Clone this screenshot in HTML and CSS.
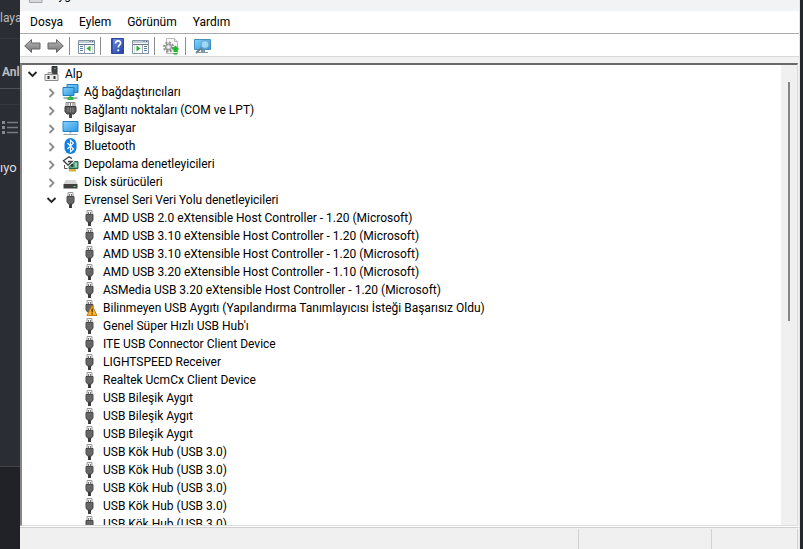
FILE: index.html
```html
<!DOCTYPE html>
<html lang="tr">
<head>
    <meta charset="UTF-8">
    <meta name="viewport" content="width=device-width, initial-scale=1.0">
    <title>Aygıt Yöneticisi</title>
    <link rel="stylesheet" href="styles.css">
</head>
<body>
    <!-- Shared icons -->
    <svg class="icon-defs" aria-hidden="true">
        <defs>
            <linearGradient id="screen" x1="0" y1="0" x2="1" y2="1">
                <stop offset="0" stop-color="#86d3fb"/>
                <stop offset="1" stop-color="#2c96e4"/>
            </linearGradient>
            <linearGradient id="metal" x1="0" y1="0" x2="0" y2="1">
                <stop offset="0" stop-color="#b8b8b8"/>
                <stop offset="1" stop-color="#767676"/>
            </linearGradient>
            <linearGradient id="help" x1="0" y1="0" x2="1" y2="1">
                <stop offset="0" stop-color="#6f92e4"/>
                <stop offset="1" stop-color="#1d3da6"/>
            </linearGradient>
        </defs>
        <symbol id="usb" viewBox="0 0 16 16">
            <path d="M5.500 5V.5h5V5" fill="#f2f2f2" stroke="#9a9a9a"/>
            <path d="M6.500 2h1v2h-1zM8.500 2h1v2h-1z" fill="#777"/>
            <path d="M4.500 4.500h7v5.500l-1.500 2h-4l-1.500-2z" fill="#666" stroke="#4a4a4a"/>
            <path d="M6.500 12h3v4h-3z" fill="#3c3c3c"/>
        </symbol>
        <symbol id="warn-usb" viewBox="0 0 16 16">
            <use href="#usb"/>
            <path d="M10.500 5.500L15.500 15.500h-10z" fill="#fdb827" stroke="#c77a10" stroke-linejoin="round"/>
            <path d="M10 8.500h1.200v4H10zM10 13.300h1.200v1.200H10z" fill="#33230a"/>
        </symbol>
        <symbol id="open" viewBox="0 0 16 16">
            <path d="M4 6l4 4 4-4" fill="none" stroke="#222" stroke-width="1.800"/>
        </symbol>
        <symbol id="closed" viewBox="0 0 16 16">
            <path d="M6 5l4 4-4 4" fill="none" stroke="#8c8c8c" stroke-width="1.800"/>
        </symbol>
    </svg>

    <aside class="backdrop">
        <span class="backdrop-top">laya</span>
        <strong class="backdrop-tab">Anl</strong>
        <div class="backdrop-list">
            <svg width="18" height="14" viewBox="0 0 18 14">
                <path d="M2 0h3v3H2zM2 5h3v3H2zM2 10h3v3H2z" fill="#858990"/>
                <path d="M7 1.500h11M7 6.500h11M7 11.500h11" stroke="#777b82" stroke-width="1.500"/>
            </svg>
        </div>
        <span class="backdrop-word">ıyo</span>
        <div class="backdrop-foot"></div>
    </aside>

    <main class="window">
        <header class="titlebar">
            <svg width="14" height="16" viewBox="0 0 14 16">
                <path d="M.5.5h12.500v15H.5z" fill="#d6d8db" stroke="#a6a6aa"/>
            </svg>
            <span>Aygıt Yöneticisi</span>
        </header>

        <nav class="menubar">
            <button>Dosya</button>
            <button>Eylem</button>
            <button>Görünüm</button>
            <button>Yardım</button>
        </nav>

        <div class="toolbar">
            <button aria-label="Geri">
                <svg width="17" height="16" viewBox="0 0 17 16">
                    <path d="M.7 8L7.500 1.500v3.500H16v6H7.500v3.500z" fill="url(#metal)" stroke="#666"/>
                </svg>
            </button>
            <button aria-label="İleri">
                <svg width="17" height="16" viewBox="0 0 17 16">
                    <path d="M16.300 8L9.500 1.500v3.500H1v6h8.500v3.500z" fill="url(#metal)" stroke="#666"/>
                </svg>
            </button>
            <span class="separator"></span>
            <button aria-label="Konsol ağacını göster">
                <svg width="17" height="16" viewBox="0 0 17 16">
                    <path d="M.5 2.500h16v13H.5z" fill="#fff" stroke="#8293a3"/>
                    <path d="M1 3h15v2H1z" fill="#c2ccd5"/>
                    <path d="M11.500 3.500h1M14 3.500h1M1 6.500h15" stroke="#627485"/>
                    <path d="M6.500 7v8" stroke="#9aa8b5"/>
                    <path d="M2 8.500h3M2 10.500h3M2 12.500h3" stroke="#537ca5"/>
                    <path d="M12.500 7.500v6L8.500 10.500z" fill="#2faa2f"/>
                    <path d="M14.500 7v8" stroke="#d5dce2"/>
                </svg>
            </button>
            <span class="separator"></span>
            <button aria-label="Yardım">
                <svg width="13" height="16" viewBox="0 0 13 16">
                    <path d="M.5.5h12v15H.5z" fill="url(#help)" stroke="#2c479b"/>
                    <path d="M1.500 1v14" stroke="#2f50ac"/>
                    <path d="M4.600 5.500c0-3.500 5-3.500 5-.5 0 2-2.300 2-2.300 4.500" fill="none" stroke="#fff" stroke-width="1.700"/>
                    <circle cx="7.200" cy="12.300" r="1.100" fill="#fff"/>
                </svg>
            </button>
            <button aria-label="Eylem bölmesini göster">
                <svg width="17" height="16" viewBox="0 0 17 16">
                    <path d="M.5 2.500h16v13H.5z" fill="#fff" stroke="#8293a3"/>
                    <path d="M1 3h15v2H1z" fill="#c2ccd5"/>
                    <path d="M11.500 3.500h1M14 3.500h1M1 6.500h15" stroke="#627485"/>
                    <path d="M10.500 7v8" stroke="#9aa8b5"/>
                    <path d="M12 8.500h3M12 10.500h3M12 12.500h3" stroke="#537ca5"/>
                    <path d="M4.500 7.500v6l4-3z" fill="#2faa2f"/>
                    <path d="M2.500 7v8" stroke="#d5dce2"/>
                </svg>
            </button>
            <span class="separator"></span>
            <button aria-label="Sürücüyü güncelle">
                <svg width="17" height="17" viewBox="0 0 17 17">
                    <path d="M3.500.5h8l3 3v12h-11z" fill="#f7f7f7" stroke="#bcbcbc"/>
                    <path d="M11.500.5v3h3" fill="#e0e0e0" stroke="#bcbcbc"/>
                    <circle cx="5.500" cy="9" r="4.500" fill="none" stroke="#8c8c8c" stroke-width="2" stroke-dasharray="2 1.500"/>
                    <circle cx="5.500" cy="9" r="3" fill="#ccc" stroke="#858585"/>
                    <circle cx="5.500" cy="9" r="1.200" fill="#fff"/>
                    <path d="M12.500 7.500l4 4h-2V14h-4v-2.500h-2zM10.500 15h4v1.500h-4z" fill="#22b62d"/>
                </svg>
            </button>
            <span class="separator"></span>
            <button aria-label="Donanım değişikliklerini tara">
                <svg width="17" height="16" viewBox="0 0 17 16">
                    <path d="M.5 1.500h16v10H.5z" fill="url(#screen)" stroke="#468fb9"/>
                    <path d="M7 12h4v2h3v1H4v-1h3z" fill="#7e98a9"/>
                    <path d="M8 9.500L2 15" stroke="#68818f" stroke-width="2"/>
                    <circle cx="11" cy="6.500" r="4" fill="#9bd8f5" stroke="#60a4c8"/>
                </svg>
            </button>
        </div>

        <section class="content">
            <ul class="tree" role="tree">
                <li class="node level-0">
                    <svg class="cell"><use href="#open"/></svg>
                    <svg class="cell" viewBox="0 0 16 16">
                        <path d="M8.500.5h5v8h-5z" fill="#3f4346" stroke="#303436"/>
                        <path d="M11 2h1v1h-1z" fill="#8cdb9b"/>
                        <path d="M4.500 9V6.500h4V9" fill="#ddd" stroke="#999"/>
                        <path d="M1.500 8.500h13v6h-13z" fill="#ececec" stroke="#8a8a8a"/>
                        <path d="M4 10h2v3H4zM10 10h2v3h-2z" fill="#333"/>
                    </svg>
                    <span>Alp</span>
                </li>
                <li class="node level-1">
                    <svg class="cell"><use href="#closed"/></svg>
                    <svg class="cell" viewBox="0 0 16 16">
                        <path d="M4.500.5h11v8h-11z" fill="url(#screen)" stroke="#237dbb"/>
                        <path d="M.5 3.500h11v8H.5z" fill="url(#screen)" stroke="#237dbb"/>
                        <path d="M1 14h14" stroke="#a7b8ac" stroke-width="2"/>
                        <path d="M5 13h6v3H5zM7 12h2v1H7z" fill="#36b54c"/>
                    </svg>
                    <span>Ağ bağdaştırıcıları</span>
                </li>
                <li class="node level-1">
                    <svg class="cell"><use href="#closed"/></svg>
                    <svg class="cell" viewBox="0 0 16 16">
                        <path d="M3.500.5h9v4h-9z" fill="#f2f2f2" stroke="#858585"/>
                        <path d="M5.500 1v3M8 1v3M10.500 1v3" stroke="#777"/>
                        <path d="M2.500 4.500h11v5l-2 2.500h-7l-2-2.500z" fill="#5b5b5b" stroke="#3f3f3f"/>
                        <path d="M5.500 6v4M8 6v4M10.500 6v4" stroke="#888"/>
                        <path d="M6.500 12h3v4h-3z" fill="#454545"/>
                    </svg>
                    <span>Bağlantı noktaları (COM ve LPT)</span>
                </li>
                <li class="node level-1">
                    <svg class="cell"><use href="#closed"/></svg>
                    <svg class="cell" viewBox="0 0 16 16">
                        <path d="M.5 1.500h15v10H.5z" fill="url(#screen)" stroke="#2584c5"/>
                        <path d="M7 12h2v1.500H7z" fill="#b4bdc3"/>
                        <path d="M1 14.500h14" stroke="#8fa3b1"/>
                    </svg>
                    <span>Bilgisayar</span>
                </li>
                <li class="node level-1">
                    <svg class="cell"><use href="#closed"/></svg>
                    <svg class="cell" viewBox="0 0 16 16">
                        <rect x="2" y="0" width="12" height="16" rx="6" fill="#0a80e8"/>
                        <path d="M5 5l6 6-3 2.700V2.300L11 5l-6 6" fill="none" stroke="#fff" stroke-width="1.100"/>
                    </svg>
                    <span>Bluetooth</span>
                </li>
                <li class="node level-1">
                    <svg class="cell"><use href="#closed"/></svg>
                    <svg class="cell" viewBox="0 0 16 16">
                        <path d="M6.500 5.500h9v7h-9z" fill="#5fae8b" stroke="#29634c"/>
                        <path d="M6.500 13h7v2.500h-7z" fill="#d9ae3d"/>
                        <path d="M8 8h3v3H8z" fill="#274c3d"/>
                        <path d="M13.500 7v4" stroke="#dceee4"/>
                        <path d="M9.500 2.500L6.500.8 1 4.800 5.500 9l4-3.500H5.500" fill="none" stroke="#fff" stroke-width="3"/>
                        <path d="M9.500 2.500L6.500.8 1 4.800 5.500 9l4-3.500H5.500" fill="none" stroke="#444" stroke-width="1.400"/>
                        <path d="M2 9v3.500h3" fill="none" stroke="#555"/>
                    </svg>
                    <span>Depolama denetleyicileri</span>
                </li>
                <li class="node level-1">
                    <svg class="cell"><use href="#closed"/></svg>
                    <svg class="cell" viewBox="0 0 16 16">
                        <path d="M3 6h10l2 4H1z" fill="#d4d4d4"/>
                        <path d="M1 10h14v4.500H1z" fill="#404040"/>
                        <path d="M11 12h2v1h-2z" fill="#5ddb72"/>
                    </svg>
                    <span>Disk sürücüleri</span>
                </li>
                <li class="node level-1">
                    <svg class="cell"><use href="#open"/></svg>
                    <svg class="cell"><use href="#usb"/></svg>
                    <span>Evrensel Seri Veri Yolu denetleyicileri</span>
                </li>
                <li class="node level-2"><svg class="cell"><use href="#usb"/></svg><span>AMD USB 2.0 eXtensible Host Controller - 1.20 (Microsoft)</span></li>
                <li class="node level-2"><svg class="cell"><use href="#usb"/></svg><span>AMD USB 3.10 eXtensible Host Controller - 1.20 (Microsoft)</span></li>
                <li class="node level-2"><svg class="cell"><use href="#usb"/></svg><span>AMD USB 3.10 eXtensible Host Controller - 1.20 (Microsoft)</span></li>
                <li class="node level-2"><svg class="cell"><use href="#usb"/></svg><span>AMD USB 3.20 eXtensible Host Controller - 1.10 (Microsoft)</span></li>
                <li class="node level-2"><svg class="cell"><use href="#usb"/></svg><span>ASMedia USB 3.20 eXtensible Host Controller - 1.20 (Microsoft)</span></li>
                <li class="node level-2"><svg class="cell"><use href="#warn-usb"/></svg><span>Bilinmeyen USB Aygıtı (Yapılandırma Tanımlayıcısı İsteği Başarısız Oldu)</span></li>
                <li class="node level-2"><svg class="cell"><use href="#usb"/></svg><span>Genel Süper Hızlı USB Hub'ı</span></li>
                <li class="node level-2"><svg class="cell"><use href="#usb"/></svg><span>ITE USB Connector Client Device</span></li>
                <li class="node level-2"><svg class="cell"><use href="#usb"/></svg><span>LIGHTSPEED Receiver</span></li>
                <li class="node level-2"><svg class="cell"><use href="#usb"/></svg><span>Realtek UcmCx Client Device</span></li>
                <li class="node level-2"><svg class="cell"><use href="#usb"/></svg><span>USB Bileşik Aygıt</span></li>
                <li class="node level-2"><svg class="cell"><use href="#usb"/></svg><span>USB Bileşik Aygıt</span></li>
                <li class="node level-2"><svg class="cell"><use href="#usb"/></svg><span>USB Bileşik Aygıt</span></li>
                <li class="node level-2"><svg class="cell"><use href="#usb"/></svg><span>USB Kök Hub (USB 3.0)</span></li>
                <li class="node level-2"><svg class="cell"><use href="#usb"/></svg><span>USB Kök Hub (USB 3.0)</span></li>
                <li class="node level-2"><svg class="cell"><use href="#usb"/></svg><span>USB Kök Hub (USB 3.0)</span></li>
                <li class="node level-2"><svg class="cell"><use href="#usb"/></svg><span>USB Kök Hub (USB 3.0)</span></li>
                <li class="node level-2"><svg class="cell"><use href="#usb"/></svg><span>USB Kök Hub (USB 3.0)</span></li>
            </ul>
            <div class="scrollbar"><div class="thumb"></div></div>
        </section>

        <footer class="statusbar">
            <span></span>
            <span></span>
            <span></span>
        </footer>
    </main>
</body>
</html>
```
FILE: styles.css
```css
* {
    margin: 0;
    padding: 0;
    box-sizing: border-box;
}

body {
    display: grid;
    grid-template-columns: 20px minmax(0, 1fr) 3px;
    height: 100vh;
    overflow: hidden;
    background: #24282c;
    font-family: "Segoe UI", Roboto, sans-serif;
    font-size: 12px;
    color: #000;
}

button {
    border: none;
    background: none;
    font: inherit;
    color: inherit;
}

.icon-defs {
    position: absolute;
    width: 0;
    height: 0;
}

/* Dark page behind the window */
.backdrop {
    display: flex;
    flex-direction: column;
    height: 100vh;
    overflow: hidden;
    background: #2a2d33;
    color: #b9bbbf;
    white-space: nowrap;
}

.backdrop-top {
    height: 39px;
    padding-top: 10px;
    border-bottom: 1px solid #33363c;
    line-height: 16px;
}

.backdrop-tab {
    height: 50px;
    padding: 25px 0 0 2px;
    border-bottom: 1px solid #50545a;
    line-height: 16px;
}

.backdrop-list {
    height: 48px;
    margin-top: 15px;
    padding-top: 16px;
    border-top: 1px solid #35383e;
}

.backdrop-word {
    flex: 1;
    padding-top: 6px;
    font-size: 13px;
    line-height: 20px;
    color: #dcdde0;
}

.backdrop-foot {
    height: 83px;
    border-top: 1px solid #414349;
    background: #212228;
}

/* Window, dragged partly above the top of the screen */
.window {
    display: flex;
    flex-direction: column;
    height: calc(100vh + 21px);
    margin-top: -21px;
    border-right: 1px solid #e4e4e4;
    background: #f0f0f0;
    overflow: hidden;
}

.titlebar {
    display: flex;
    align-items: center;
    gap: 8px;
    height: 32px;
    flex: none;
    padding-left: 9px;
    background: #f2f3f5;
}

.menubar {
    display: flex;
    height: 23px;
    flex: none;
    padding-left: 2px;
    border-bottom: 1px solid #aaa;
    background: #fff;
}

.menubar button {
    padding: 0 8px;
    line-height: 22px;
}

.toolbar {
    display: flex;
    align-items: center;
    height: 23px;
    flex: none;
    padding: 2px 0 0 1px;
    border-bottom: 1px solid #d8d8d8;
    background: #fff;
}

.toolbar button {
    display: flex;
    align-items: center;
    justify-content: center;
    width: 23px;
    height: 20px;
}

.separator {
    width: 1px;
    height: 18px;
    margin: 0 5px 0 2px;
    background: #8c8c8c;
}

.content {
    display: flex;
    flex: 1;
    min-height: 0;
    margin: 6px 1px 0 0;
    border: solid;
    border-width: 2px 1px 1px 2px;
    border-color: #696969 #ddd #ddd #858585;
    background: #fff;
}

.tree {
    flex: 1;
    overflow: hidden;
    list-style: none;
}

.node {
    display: flex;
    align-items: center;
    height: 18px;
    white-space: nowrap;
}

.node span {
    padding-left: 4px;
    line-height: 18px;
}

.cell {
    width: 19px;
    height: 16px;
    flex: none;
}

.level-0 {
    padding-left: 1px;
}

.level-1 {
    padding-left: 20px;
}

.level-2 {
    padding-left: 58px;
}

.scrollbar {
    width: 16px;
    padding: 17px 0 0 7px;
    background: #f0f0f0;
}

.thumb {
    width: 2px;
    height: 54%;
    background: #858585;
}

.statusbar {
    display: flex;
    height: 22px;
    flex: none;
    margin-top: 1px;
    padding: 1px 1px 0 0;
    border-top: 1px solid #d0d0d0;
    box-shadow: 0 -1px #fff;
}

.statusbar span {
    width: 133px;
    border-right: 1px solid #d2d2d2;
}

.statusbar span:first-child {
    flex: 1;
}

.statusbar span:last-child {
    width: 86px;
}
```
